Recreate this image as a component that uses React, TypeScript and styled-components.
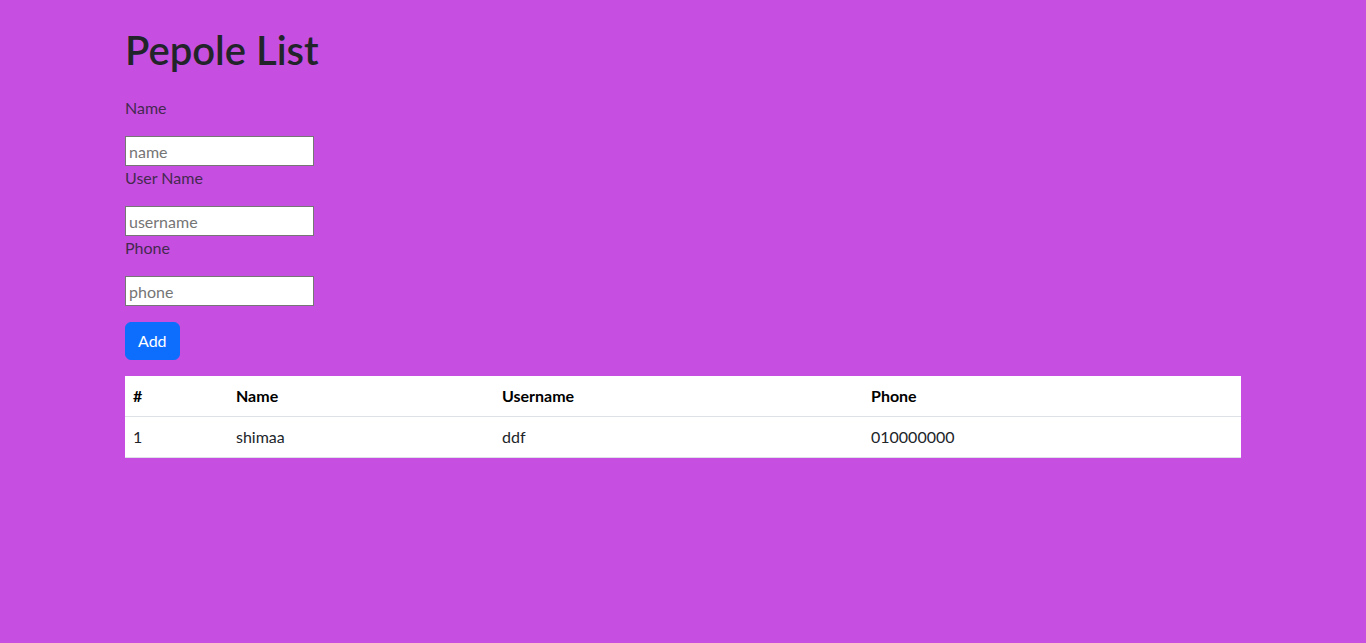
import React from "react";
import styled, { createGlobalStyle } from "styled-components";

const GlobalStyle = createGlobalStyle`
  html, body {
    margin: 0;
    padding: 0;
    background: #c64fe2;
    font-family: Lato, "Noto Sans", sans-serif;
    font-size: 16px;
    line-height: 1.5;
    color: #212529;
  }
  * { box-sizing: border-box; }
`;

const Container = styled.div`
  width: 1140px;
  margin: 0 auto;
  padding: 26px 12px 0;
`;

const Title = styled.h1`
  margin: 0 0 22px;
  font-size: 40px;
  font-weight: 600;
  line-height: 48px;
  color: #212529;
`;

const Form = styled.form`
  display: flex;
  flex-direction: column;
  align-items: flex-start;
`;

const Label = styled.label`
  display: block;
  line-height: 24px;
  margin-bottom: 16px;
  color: #45294f;
`;

const Input = styled.input`
  width: 189px;
  height: 30px;
  padding: 0 3px;
  border: 1px solid #767676;
  border-radius: 0;
  background: #fff;
  font-family: inherit;
  font-size: 16px;
  line-height: 26px;
  color: #212529;
  &::placeholder { color: #757575; }
`;

const Button = styled.button`
  margin-top: 16px;
  height: 38px;
  padding: 6px 12px;
  border: 1px solid #0d6efd;
  border-radius: 6px;
  background: #0d6efd;
  color: #fff;
  font-family: inherit;
  font-size: 16px;
  line-height: 24px;
  cursor: pointer;
`;

const Table = styled.table`
  margin-top: 16px;
  width: 100%;
  border-collapse: collapse;
  background: #fff;
  color: #212529;
`;

const Th = styled.th<{ $w: number }>`
  width: ${(p) => p.$w}px;
  text-align: left;
  font-weight: 700;
  padding: 8px;
  height: 40px;
  border-bottom: 1px solid #dee2e6;
  color: #000;
`;

const Td = styled.td`
  padding: 8px;
  height: 41px;
  border-bottom: 1px solid #dee2e6;
`;

const fields = [
  { label: "Name", ph: "name" },
  { label: "User Name", ph: "username" },
  { label: "Phone", ph: "phone" },
];

export default function App() {
  return (
    <>
      <GlobalStyle />
      <Container>
        <Title>Pepole List</Title>
        <Form onSubmit={(e) => e.preventDefault()}>
          {fields.map((f) => (
            <React.Fragment key={f.ph}>
              <Label>{f.label}</Label>
              <Input placeholder={f.ph} />
            </React.Fragment>
          ))}
          <Button type="submit">Add</Button>
        </Form>
        <Table>
          <thead>
            <tr>
              <Th $w={103}>#</Th>
              <Th $w={266}>Name</Th>
              <Th $w={369}>Username</Th>
              <Th $w={378}>Phone</Th>
            </tr>
          </thead>
          <tbody>
            <tr>
              <Td>1</Td>
              <Td>shimaa</Td>
              <Td>ddf</Td>
              <Td>010000000</Td>
            </tr>
          </tbody>
        </Table>
      </Container>
    </>
  );
}
